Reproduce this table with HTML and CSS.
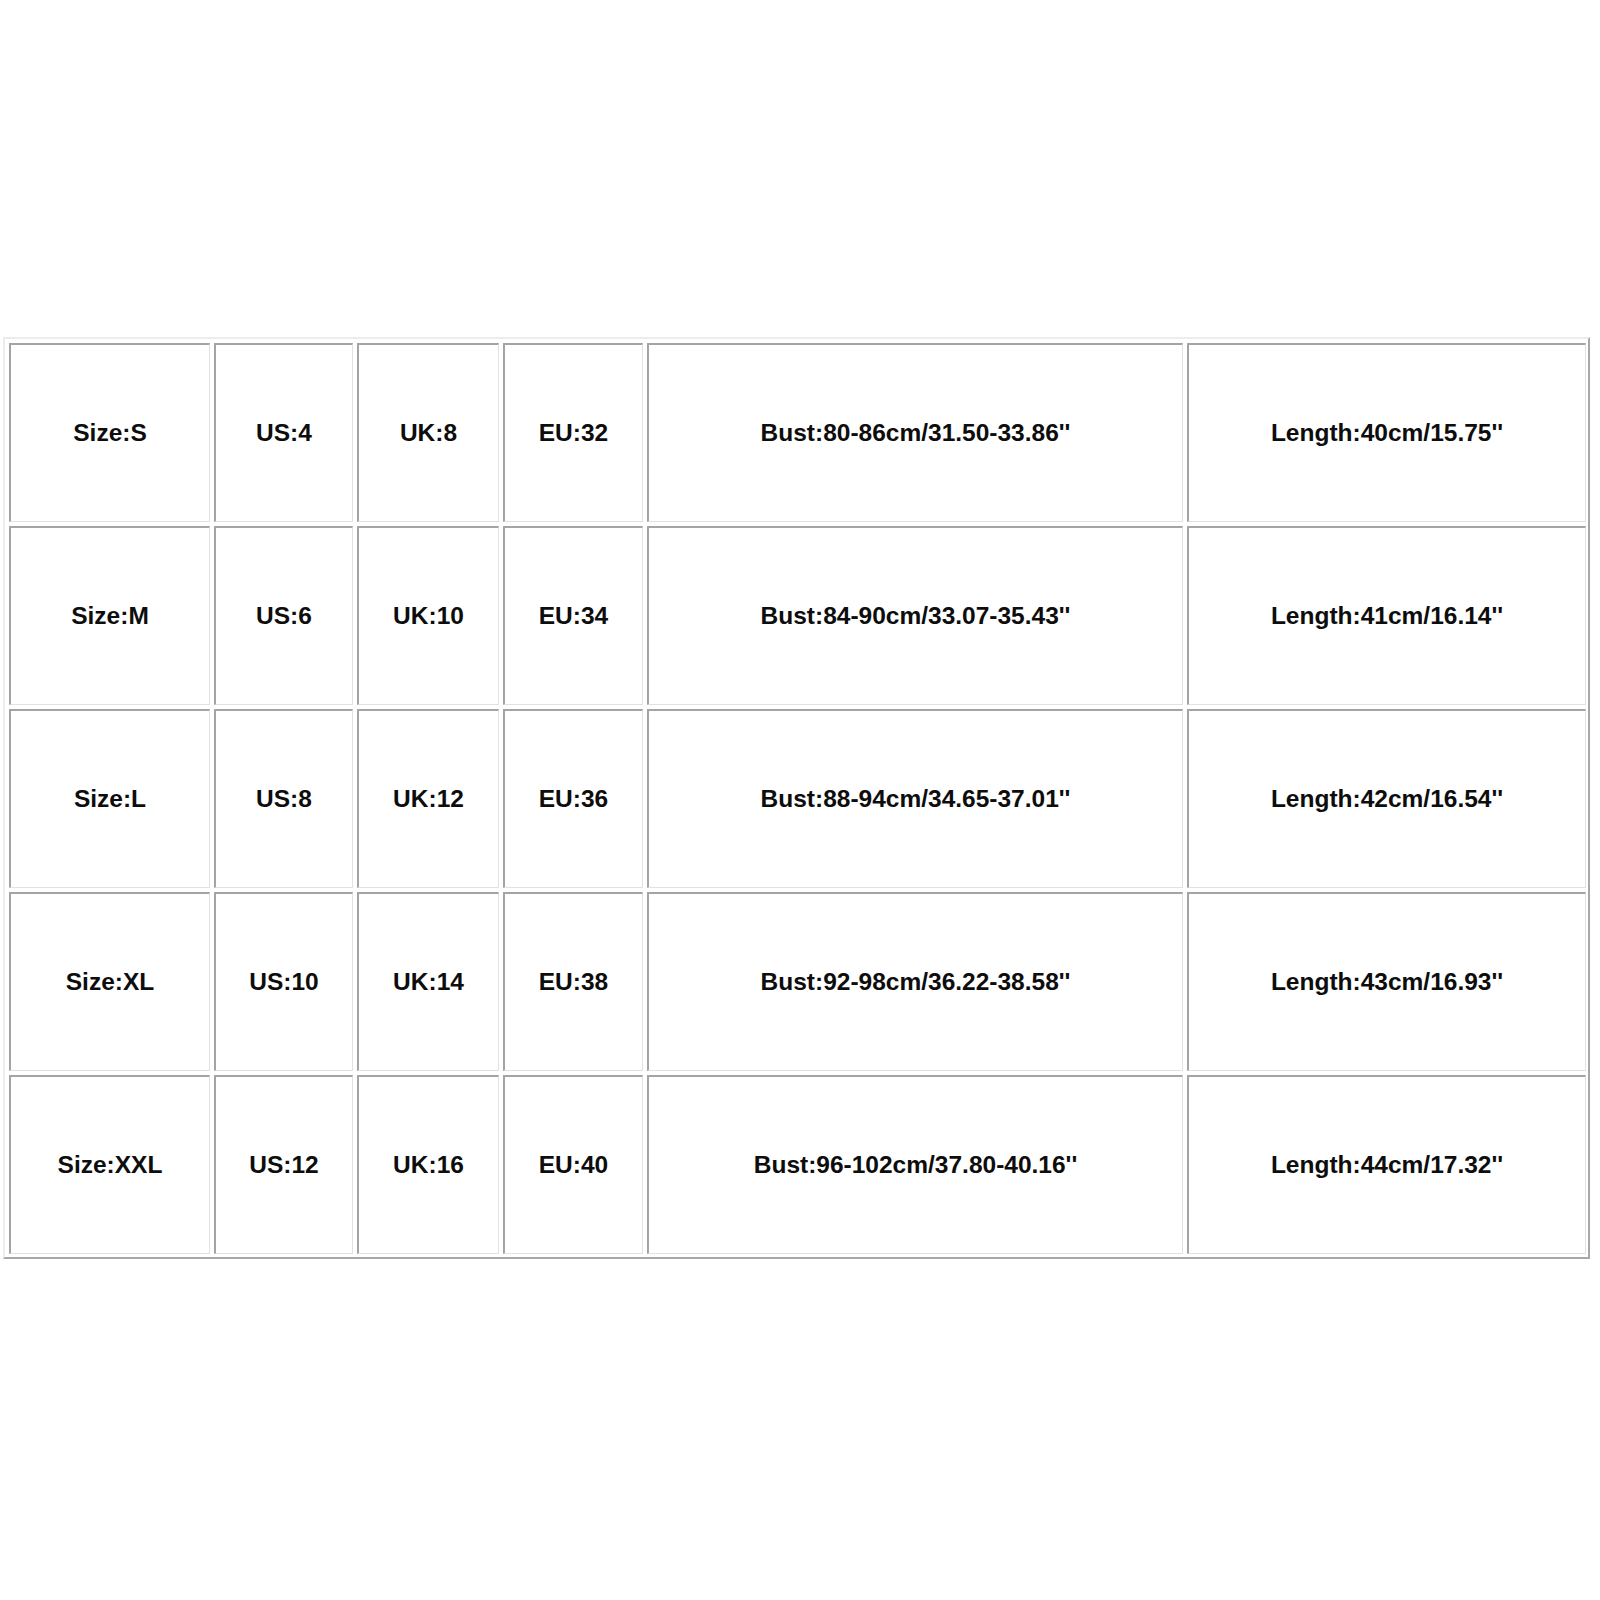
FILE: index.html
```html
<!DOCTYPE html>
<html lang="en">
<head>
<meta charset="utf-8">
<title>Size Chart</title>
<link rel="stylesheet" href="styles.css">
</head>
<body>
<div class="chart">
  <div class="cell">Size:S</div>
  <div class="cell">US:4</div>
  <div class="cell">UK:8</div>
  <div class="cell">EU:32</div>
  <div class="cell">Bust:80-86cm/31.50-33.86''</div>
  <div class="cell">Length:40cm/15.75''</div>

  <div class="cell">Size:M</div>
  <div class="cell">US:6</div>
  <div class="cell">UK:10</div>
  <div class="cell">EU:34</div>
  <div class="cell">Bust:84-90cm/33.07-35.43''</div>
  <div class="cell">Length:41cm/16.14''</div>

  <div class="cell">Size:L</div>
  <div class="cell">US:8</div>
  <div class="cell">UK:12</div>
  <div class="cell">EU:36</div>
  <div class="cell">Bust:88-94cm/34.65-37.01''</div>
  <div class="cell">Length:42cm/16.54''</div>

  <div class="cell">Size:XL</div>
  <div class="cell">US:10</div>
  <div class="cell">UK:14</div>
  <div class="cell">EU:38</div>
  <div class="cell">Bust:92-98cm/36.22-38.58''</div>
  <div class="cell">Length:43cm/16.93''</div>

  <div class="cell">Size:XXL</div>
  <div class="cell">US:12</div>
  <div class="cell">UK:16</div>
  <div class="cell">EU:40</div>
  <div class="cell">Bust:96-102cm/37.80-40.16''</div>
  <div class="cell">Length:44cm/17.32''</div>
</div>
</body>
</html>
```

FILE: styles.css
```css
html, body {
  margin: 0;
  padding: 0;
  background: #ffffff;
}

body {
  width: 1600px;
  height: 1600px;
  font-family: "Liberation Sans", Arial, sans-serif;
}

.chart {
  margin: 337px 0 0 3px;
  width: 1577px;
  display: grid;
  grid-template-columns: 201px 139px 142px 140px 536px 399px;
  grid-template-rows: repeat(5, 179px);
  gap: 4px;
  padding: 4px 2px 3px 4px;
  border-style: solid;
  border-width: 2px;
  border-color: #ececec #a8a8a8 #a8a8a8 #ececec;
}

.cell {
  display: flex;
  align-items: center;
  justify-content: center;
  border-style: solid;
  border-width: 2px 1px 1px 2px;
  border-color: #a4a4a4 #e2e2e2 #e2e2e2 #a4a4a4;
  font-size: 24.5px;
  font-weight: bold;
  color: #0d0d0d;
  white-space: nowrap;
}
```
